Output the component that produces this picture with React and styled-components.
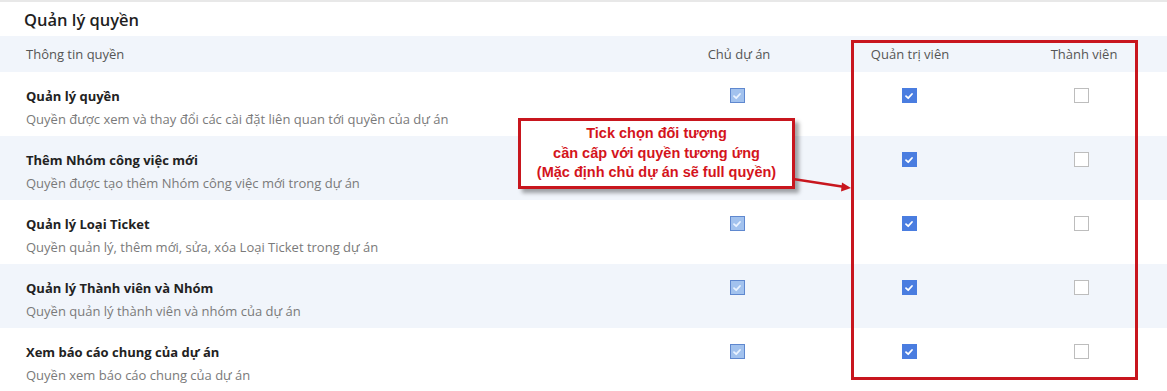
import React from "react";
import styled, { createGlobalStyle } from "styled-components";

const GlobalStyle = createGlobalStyle`
  body {
    margin: 0;
    background: #fff;
    font-family: "Open Sans", "Noto Sans", sans-serif;
  }
`;

const Page = styled.div`
  position: relative;
  width: 1167px;
  height: 391px;
  overflow: hidden;
  border-top: 2px solid #e8e8e8;
  box-sizing: border-box;
`;

const Title = styled.h2`
  margin: 0;
  padding: 6px 24px 0;
  height: 34px;
  box-sizing: border-box;
  font-size: 16.5px;
  font-weight: 600;
  color: #1f1f1f;
`;

const Row = styled.div`
  display: grid;
  grid-template-columns: 1fr 172px 172px 172px;
  height: ${(p) => (p.$head ? 36 : 64)}px;
  background: ${(p) => (p.$shaded ? "#f1f5fb" : "#fff")};
  align-items: ${(p) => (p.$head ? "center" : "start")};
`;

const HeadLabel = styled.div`
  padding-left: 26px;
  font-size: 13px;
  color: #555;
`;

const HeadCol = styled.div`
  text-align: center;
  font-size: 13px;
  color: #555;
  padding-left: ${(p) => p.$shift || 0}px;
`;

const Info = styled.div`
  padding: 14px 0 0 26px;
`;

const Name = styled.div`
  font-size: 13px;
  font-weight: 700;
  line-height: 20px;
  color: #222;
`;

const Desc = styled.div`
  margin-top: 3px;
  font-size: 13px;
  line-height: 20px;
  color: #7a7a7a;
`;

const Cell = styled.div`
  display: flex;
  justify-content: center;
  padding-top: 16px;
`;

const Box = styled.span`
  width: 15px;
  height: 15px;
  box-sizing: border-box;
  display: flex;
  align-items: center;
  justify-content: center;
  border: 1px solid
    ${(p) => (p.$state === "off" ? "#bdbdbd" : p.$state === "locked" ? "#5f88cf" : "#4a7de0")};
  background: ${(p) => (p.$state === "off" ? "#fff" : p.$state === "locked" ? "#a2c2ee" : "#4a7de0")};
`;

const Frame = styled.div`
  position: absolute;
  left: 851px;
  top: 38px;
  width: 287px;
  height: 340px;
  border: 3px solid #c8161e;
  box-sizing: border-box;
  pointer-events: none;
`;

const Callout = styled.div`
  position: absolute;
  left: 518px;
  top: 116px;
  width: 277px;
  height: 71px;
  box-sizing: border-box;
  border: 3px solid #c8161e;
  background: #fff;
  box-shadow: 4px 4px 4px rgba(0, 0, 0, 0.35);
  display: flex;
  flex-direction: column;
  align-items: center;
  justify-content: center;
  font-family: "Liberation Sans", Arial, sans-serif;
  font-weight: 700;
  font-size: 14.5px;
  line-height: 19.5px;
  color: #d4141c;
  text-align: center;
`;

const Arrow = styled.svg`
  position: absolute;
  left: 793px;
  top: 170px;
`;

const Check = ({ state }) => (
  <Box $state={state}>
    {state !== "off" && (
      <svg width="10" height="10" viewBox="0 0 10 10">
        <path
          d="M2 5.2 L4.2 7.2 L8 3"
          fill="none"
          stroke={state === "locked" ? "#eaf3ff" : "#fff"}
          strokeWidth="1.8"
          strokeLinecap="round"
          strokeLinejoin="round"
        />
      </svg>
    )}
  </Box>
);

const permissions = [
  { name: "Quản lý quyền", desc: "Quyền được xem và thay đổi các cài đặt liên quan tới quyền của dự án" },
  { name: "Thêm Nhóm công việc mới", desc: "Quyền được tạo thêm Nhóm công việc mới trong dự án" },
  { name: "Quản lý Loại Ticket", desc: "Quyền quản lý, thêm mới, sửa, xóa Loại Ticket trong dự án" },
  { name: "Quản lý Thành viên và Nhóm", desc: "Quyền quản lý thành viên và nhóm của dự án" },
  { name: "Xem báo cáo chung của dự án", desc: "Quyền xem báo cáo chung của dự án" },
];

export default function App() {
  return (
    <>
      <GlobalStyle />
      <Page>
        <Title>Quản lý quyền</Title>
        <Row $head $shaded>
          <HeadLabel>Thông tin quyền</HeadLabel>
          <HeadCol $shift={4}>Chủ dự án</HeadCol>
          <HeadCol $shift={2}>Quản trị viên</HeadCol>
          <HeadCol $shift={6}>Thành viên</HeadCol>
        </Row>
        {permissions.map((p, i) => (
          <Row key={p.name} $shaded={i % 2 === 1}>
            <Info>
              <Name>{p.name}</Name>
              <Desc>{p.desc}</Desc>
            </Info>
            <Cell>
              <Check state="locked" />
            </Cell>
            <Cell>
              <Check state="on" />
            </Cell>
            <Cell>
              <Check state="off" />
            </Cell>
          </Row>
        ))}
        <Frame />
        <Callout>
          <div>Tick chọn đối tượng</div>
          <div>cần cấp với quyền tương ứng</div>
          <div>(Mặc định chủ dự án sẽ full quyền)</div>
        </Callout>
        <Arrow width="60" height="22" viewBox="0 0 60 22">
          <path d="M0 7 L52 15" stroke="#c8161e" strokeWidth="2.5" fill="none" />
          <path d="M58 16 L49 10.5 L48 19.5 Z" fill="#c8161e" />
        </Arrow>
      </Page>
    </>
  );
}
